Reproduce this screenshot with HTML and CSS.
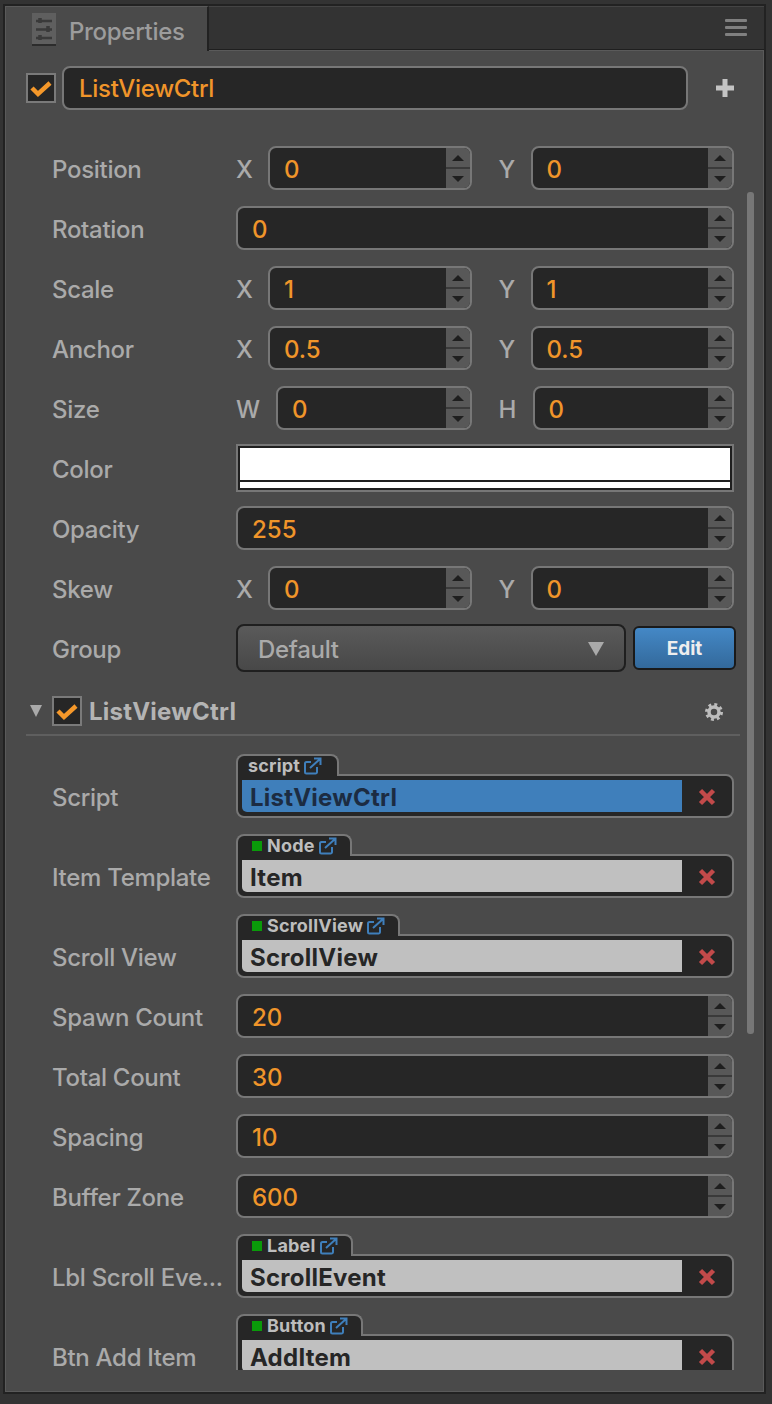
FILE: index.html
```html
<!DOCTYPE html>
<html lang="en">
  <head>
    <meta charset="UTF-8" />
    <title>Properties</title>
    <link rel="stylesheet" href="styles.css">
  </head>
  <body>
    <div class="panel">
      <div class="panel-head">
        <div class="panel-tab">
          <svg class="tab-icon" width="26" height="34" viewBox="0 0 26 34">
            <rect x="1" y="0" width="24" height="31" fill="#5f5f5f"/>
            <rect x="1" y="31" width="24" height="2" fill="#2c2c2c"/>
            <path d="M5 8h16M5 16.500h16M5 25h16" stroke="#3a3a3a" stroke-width="2.500"/>
            <path d="M9 5v5M17 13v6M9 22v5" stroke="#3a3a3a" stroke-width="3.500"/>
          </svg>
          <span class="tab-title">Properties</span>
        </div>
        <div class="panel-menu"><i></i><i></i><i></i></div>
      </div>

      <div class="panel-body">
        <div class="node-row">
          <span class="check"><svg width="26" height="26" viewBox="0 0 26 26"><path d="M4 13l6 6 12-11" fill="none" stroke="#f5982a" stroke-width="4.500"/></svg></span>
          <div class="name-field">ListViewCtrl</div>
          <svg class="plus" width="20" height="20" viewBox="0 0 20 20"><path d="M10 1v18M1 10h18" stroke="#c4c4c4" stroke-width="5"/></svg>
        </div>

        <div class="props">
          <div class="row">
            <div class="row-label">Position</div>
            <div class="pair">
              <div class="cell"><span class="axis">X</span><div class="num"><span class="num-value">0</span><div class="stepper"><b class="up"></b><b class="down"></b></div></div></div>
              <div class="cell"><span class="axis">Y</span><div class="num"><span class="num-value">0</span><div class="stepper"><b class="up"></b><b class="down"></b></div></div></div>
            </div>
          </div>
          <div class="row">
            <div class="row-label">Rotation</div>
            <div class="num"><span class="num-value">0</span><div class="stepper"><b class="up"></b><b class="down"></b></div></div>
          </div>
          <div class="row">
            <div class="row-label">Scale</div>
            <div class="pair">
              <div class="cell"><span class="axis">X</span><div class="num"><span class="num-value">1</span><div class="stepper"><b class="up"></b><b class="down"></b></div></div></div>
              <div class="cell"><span class="axis">Y</span><div class="num"><span class="num-value">1</span><div class="stepper"><b class="up"></b><b class="down"></b></div></div></div>
            </div>
          </div>
          <div class="row">
            <div class="row-label">Anchor</div>
            <div class="pair">
              <div class="cell"><span class="axis">X</span><div class="num"><span class="num-value">0.5</span><div class="stepper"><b class="up"></b><b class="down"></b></div></div></div>
              <div class="cell"><span class="axis">Y</span><div class="num"><span class="num-value">0.5</span><div class="stepper"><b class="up"></b><b class="down"></b></div></div></div>
            </div>
          </div>
          <div class="row">
            <div class="row-label">Size</div>
            <div class="pair">
              <div class="cell"><span class="axis axis-w">W</span><div class="num"><span class="num-value">0</span><div class="stepper"><b class="up"></b><b class="down"></b></div></div></div>
              <div class="cell"><span class="axis axis-h">H</span><div class="num"><span class="num-value">0</span><div class="stepper"><b class="up"></b><b class="down"></b></div></div></div>
            </div>
          </div>
          <div class="row">
            <div class="row-label">Color</div>
            <div class="color-well"><div class="color-swatch"><div class="color-alpha"></div></div></div>
          </div>
          <div class="row">
            <div class="row-label">Opacity</div>
            <div class="num"><span class="num-value">255</span><div class="stepper"><b class="up"></b><b class="down"></b></div></div>
          </div>
          <div class="row">
            <div class="row-label">Skew</div>
            <div class="pair">
              <div class="cell"><span class="axis">X</span><div class="num"><span class="num-value">0</span><div class="stepper"><b class="up"></b><b class="down"></b></div></div></div>
              <div class="cell"><span class="axis">Y</span><div class="num"><span class="num-value">0</span><div class="stepper"><b class="up"></b><b class="down"></b></div></div></div>
            </div>
          </div>
          <div class="row">
            <div class="row-label">Group</div>
            <div class="select"><span>Default</span><i class="select-arrow"></i></div>
            <div class="edit-button">Edit</div>
          </div>

          <div class="section-head">
            <i class="fold"></i>
            <span class="check"><svg width="26" height="26" viewBox="0 0 26 26"><path d="M4 13l6 6 12-11" fill="none" stroke="#f5982a" stroke-width="4.500"/></svg></span>
            <span class="section-title">ListViewCtrl</span>
            <svg class="gear" width="20" height="20" viewBox="0 0 20 20">
              <circle cx="10" cy="10" r="5" fill="none" stroke="#bdbdbd" stroke-width="3.500"/>
              <circle cx="10" cy="10" r="7.500" fill="none" stroke="#bdbdbd" stroke-width="3" stroke-dasharray="2.900 3"/>
            </svg>
          </div>

          <div class="row row-obj">
            <div class="row-label">Script</div>
            <div class="obj">
              <div class="obj-tab obj-tab-script"><span class="obj-type">script</span><svg class="ext" width="20" height="18" viewBox="0 0 20 18"><path d="M14 10v5a1.500 1.500 0 0 1-1.500 1.500h-9A1.500 1.500 0 0 1 2 15V6.500A1.500 1.500 0 0 1 3.500 5H8M7 11L17 2M11 1.500h6.500V8" fill="none" stroke="#3f7fbb" stroke-width="2"/></svg></div>
              <div class="obj-box"><div class="obj-value obj-asset">ListViewCtrl</div><svg class="remove" width="18" height="18" viewBox="0 0 18 18"><path d="M2.500 2.500l13 13M15.500 2.500l-13 13" stroke="#c24a4a" stroke-width="4.500"/></svg></div>
            </div>
          </div>
          <div class="row row-obj">
            <div class="row-label">Item Template</div>
            <div class="obj">
              <div class="obj-tab"><i class="node-dot"></i><span class="obj-type">Node</span><svg class="ext" width="20" height="18" viewBox="0 0 20 18"><path d="M14 10v5a1.500 1.500 0 0 1-1.500 1.500h-9A1.500 1.500 0 0 1 2 15V6.500A1.500 1.500 0 0 1 3.500 5H8M7 11L17 2M11 1.500h6.500V8" fill="none" stroke="#3f7fbb" stroke-width="2"/></svg></div>
              <div class="obj-box"><div class="obj-value">Item</div><svg class="remove" width="18" height="18" viewBox="0 0 18 18"><path d="M2.500 2.500l13 13M15.500 2.500l-13 13" stroke="#c24a4a" stroke-width="4.500"/></svg></div>
            </div>
          </div>
          <div class="row row-obj">
            <div class="row-label">Scroll View</div>
            <div class="obj">
              <div class="obj-tab"><i class="node-dot"></i><span class="obj-type">ScrollView</span><svg class="ext" width="20" height="18" viewBox="0 0 20 18"><path d="M14 10v5a1.500 1.500 0 0 1-1.500 1.500h-9A1.500 1.500 0 0 1 2 15V6.500A1.500 1.500 0 0 1 3.500 5H8M7 11L17 2M11 1.500h6.500V8" fill="none" stroke="#3f7fbb" stroke-width="2"/></svg></div>
              <div class="obj-box"><div class="obj-value">ScrollView</div><svg class="remove" width="18" height="18" viewBox="0 0 18 18"><path d="M2.500 2.500l13 13M15.500 2.500l-13 13" stroke="#c24a4a" stroke-width="4.500"/></svg></div>
            </div>
          </div>
          <div class="row">
            <div class="row-label">Spawn Count</div>
            <div class="num"><span class="num-value">20</span><div class="stepper"><b class="up"></b><b class="down"></b></div></div>
          </div>
          <div class="row">
            <div class="row-label">Total Count</div>
            <div class="num"><span class="num-value">30</span><div class="stepper"><b class="up"></b><b class="down"></b></div></div>
          </div>
          <div class="row">
            <div class="row-label">Spacing</div>
            <div class="num"><span class="num-value">10</span><div class="stepper"><b class="up"></b><b class="down"></b></div></div>
          </div>
          <div class="row">
            <div class="row-label">Buffer Zone</div>
            <div class="num"><span class="num-value">600</span><div class="stepper"><b class="up"></b><b class="down"></b></div></div>
          </div>
          <div class="row row-obj">
            <div class="row-label">Lbl Scroll Eve...</div>
            <div class="obj">
              <div class="obj-tab"><i class="node-dot"></i><span class="obj-type">Label</span><svg class="ext" width="20" height="18" viewBox="0 0 20 18"><path d="M14 10v5a1.500 1.500 0 0 1-1.500 1.500h-9A1.500 1.500 0 0 1 2 15V6.500A1.500 1.500 0 0 1 3.500 5H8M7 11L17 2M11 1.500h6.500V8" fill="none" stroke="#3f7fbb" stroke-width="2"/></svg></div>
              <div class="obj-box"><div class="obj-value">ScrollEvent</div><svg class="remove" width="18" height="18" viewBox="0 0 18 18"><path d="M2.500 2.500l13 13M15.500 2.500l-13 13" stroke="#c24a4a" stroke-width="4.500"/></svg></div>
            </div>
          </div>
          <div class="row row-obj">
            <div class="row-label">Btn Add Item</div>
            <div class="obj">
              <div class="obj-tab"><i class="node-dot"></i><span class="obj-type">Button</span><svg class="ext" width="20" height="18" viewBox="0 0 20 18"><path d="M14 10v5a1.500 1.500 0 0 1-1.500 1.500h-9A1.500 1.500 0 0 1 2 15V6.500A1.500 1.500 0 0 1 3.500 5H8M7 11L17 2M11 1.500h6.500V8" fill="none" stroke="#3f7fbb" stroke-width="2"/></svg></div>
              <div class="obj-box"><div class="obj-value">AddItem</div><svg class="remove" width="18" height="18" viewBox="0 0 18 18"><path d="M2.500 2.500l13 13M15.500 2.500l-13 13" stroke="#c24a4a" stroke-width="4.500"/></svg></div>
            </div>
          </div>
        </div>

        <div class="scrollbar"></div>
      </div>
    </div>
  </body>
</html>
```

FILE: styles.css
```css
html,
body {
  margin: 0;
  height: 100%;
}
body {
  background-color: #333;
  font-family: Inter, "Liberation Sans", sans-serif;
  font-size: 24px;
  font-weight: 450;
  letter-spacing: -0.3px;
  color: #aaa;
  overflow: hidden;
}
.panel {
  box-sizing: border-box;
  width: 763px;
  height: 1390px;
  margin: 4px 0 0 3px;
  border: 2px solid #222;
  display: flex;
  flex-direction: column;
}
.panel-head {
  height: 42px;
  display: flex;
  justify-content: space-between;
  background-color: #333;
  border-top: 1px solid #444;
  border-bottom: 1px solid #1f1f1f;
}
.panel-tab {
  width: 204px;
  height: 45px;
  margin-top: -1px;
  padding-left: 25px;
  box-sizing: border-box;
  display: flex;
  align-items: center;
  gap: 12px;
  background-color: #4a4a4a;
  border-top: 1px solid #5a5a5a;
  border-left: 1px solid #5a5a5a;
  border-right: 2px solid #222;
  color: #9c9c9c;
  position: relative;
  z-index: 1;
}
.tab-icon {
  margin-top: 2px;
}
.tab-title {
  padding-top: 4px;
}
.panel-menu {
  display: flex;
  flex-direction: column;
  gap: 4px;
  padding: 12px 17px 0 0;
}
.panel-menu i {
  display: block;
  width: 22px;
  height: 3px;
  background-color: #808080;
  border-radius: 1px;
}
.panel-body {
  flex: 1;
  min-height: 0;
  background-color: #4a4a4a;
  border: 1px solid #5a5a5a;
  position: relative;
}
.node-row {
  display: flex;
  align-items: center;
  gap: 6px;
  padding: 15px 0 0 20px;
}
.check {
  box-sizing: border-box;
  width: 30px;
  height: 30px;
  flex: none;
  background-color: #262626;
  border: 2px solid #7a7a7a;
  display: flex;
  align-items: center;
  justify-content: center;
}
.name-field {
  box-sizing: border-box;
  width: 626px;
  height: 44px;
  padding-left: 15px;
  line-height: 42px;
  background-color: #262626;
  border: 2px solid #777;
  border-radius: 8px;
  color: #f0952a;
}
.plus {
  margin-left: 21px;
}
.props {
  height: 1224px;
  margin-top: 36px;
  padding: 0 29px 0 46px;
  overflow: hidden;
  display: flex;
  flex-direction: column;
  gap: 16px;
}
.row {
  flex: none;
  height: 44px;
  display: flex;
  align-items: center;
}
.row-label {
  width: 184px;
  flex: none;
  padding-top: 2px;
  white-space: nowrap;
}
.pair {
  flex: 1;
  display: grid;
  grid-template-columns: 1fr 1fr;
  gap: 27px;
}
.cell {
  display: flex;
  align-items: center;
}
.axis {
  width: 32px;
  flex: none;
  padding-top: 2px;
}
.axis-w {
  width: 40px;
}
.axis-h {
  width: 34px;
}
.num {
  flex: 1;
  box-sizing: border-box;
  height: 44px;
  display: flex;
  justify-content: space-between;
  background-color: #262626;
  border: 2px solid #777;
  border-radius: 8px;
  overflow: hidden;
}
.num-value {
  padding-left: 14px;
  line-height: 44px;
  letter-spacing: 0;
  color: #f0952a;
}
.stepper {
  width: 24px;
  display: flex;
  flex-direction: column;
  background-color: #585858;
}
.stepper b {
  flex: 1;
  display: flex;
  align-items: center;
  justify-content: center;
}
.stepper .up {
  border-bottom: 2px solid #3a3a3a;
}
.stepper .up::after,
.stepper .down::after {
  content: "";
  border-left: 6px solid transparent;
  border-right: 6px solid transparent;
}
.stepper .up::after {
  border-bottom: 6px solid #1f1f1f;
}
.stepper .down::after {
  border-top: 6px solid #1f1f1f;
}
.color-well {
  flex: 1;
  box-sizing: border-box;
  height: 48px;
  margin: -2px 0;
  border: 2px solid #777;
}
.color-swatch {
  box-sizing: border-box;
  height: 100%;
  background-color: #fff;
  border: 2px solid #1f1f1f;
  display: flex;
  flex-direction: column;
  justify-content: flex-end;
}
.color-alpha {
  box-sizing: border-box;
  height: 8px;
  border-top: 2px solid #1f1f1f;
}
.select {
  box-sizing: border-box;
  width: 390px;
  height: 48px;
  margin: -2px 0;
  padding: 2px 20px 0;
  flex: none;
  display: flex;
  align-items: center;
  justify-content: space-between;
  background: linear-gradient(#5a5a5a, #484848);
  border: 2px solid #1f1f1f;
  border-radius: 8px;
}
.select-arrow {
  border-left: 8px solid transparent;
  border-right: 8px solid transparent;
  border-top: 14px solid #aaa;
}
.edit-button {
  box-sizing: border-box;
  width: 103px;
  height: 44px;
  margin-left: 7px;
  flex: none;
  text-align: center;
  line-height: 42px;
  font-size: 19px;
  font-weight: 700;
  letter-spacing: 0;
  color: #eee;
  background: linear-gradient(#4488c6, #33699b);
  border: 2px solid #1a1a1a;
  border-radius: 6px;
}
.section-head {
  flex: none;
  height: 50px;
  margin: 0 -6px 2px -26px;
  padding-top: 2px;
  box-sizing: border-box;
  border-bottom: 2px solid #5f5f5f;
  display: flex;
  align-items: center;
}
.fold {
  margin: 0 10px 0 4px;
  border-left: 6px solid transparent;
  border-right: 6px solid transparent;
  border-top: 12px solid #aaa;
}
.section-title {
  flex: 1;
  margin-left: 7px;
  font-weight: 700;
  letter-spacing: 0.25px;
  color: #b4b4b4;
}
.gear {
  margin: 2px 16px 0 0;
}
.row-obj {
  height: 64px;
  align-items: flex-end;
}
.row-obj .row-label {
  padding-top: 0;
  line-height: 44px;
  margin-bottom: -2px;
}
.obj {
  flex: 1;
  display: flex;
  flex-direction: column;
}
.obj-tab {
  align-self: flex-start;
  box-sizing: border-box;
  height: 22px;
  margin-bottom: -2px;
  padding: 0 12px 0 10px;
  display: flex;
  align-items: center;
  gap: 3px;
  font-size: 18px;
  font-weight: 700;
  letter-spacing: 0.2px;
  color: #bdbdbd;
  background-color: #262626;
  border: 2px solid #777;
  border-bottom: 0;
  border-radius: 8px 8px 0 0;
  position: relative;
  z-index: 1;
}
.obj-tab-script {
  padding-right: 14px;
}
.obj-type {
  padding-bottom: 2px;
}
.node-dot {
  width: 10px;
  height: 10px;
  margin: 0 2px 0 4px;
  background-color: #0a9a0a;
}
.obj-box {
  box-sizing: border-box;
  height: 44px;
  padding: 4px 0 4px 4px;
  display: flex;
  background-color: #262626;
  border: 2px solid #777;
  border-radius: 0 8px 8px 8px;
}
.obj-value {
  box-sizing: border-box;
  width: 440px;
  height: 32px;
  padding-left: 8px;
  line-height: 36px;
  font-weight: 700;
  letter-spacing: 0.25px;
  color: #262626;
  background-color: #c0c0c0;
  border-radius: 0 0 0 5px;
}
.obj-asset {
  color: #1c2c42;
  background-color: #3f7fbb;
}
.remove {
  margin: 8px 0 0 16px;
}
.scrollbar {
  position: absolute;
  left: 741px;
  top: 141px;
  width: 7px;
  height: 842px;
  background-color: #777;
  border-radius: 3px;
}
```
